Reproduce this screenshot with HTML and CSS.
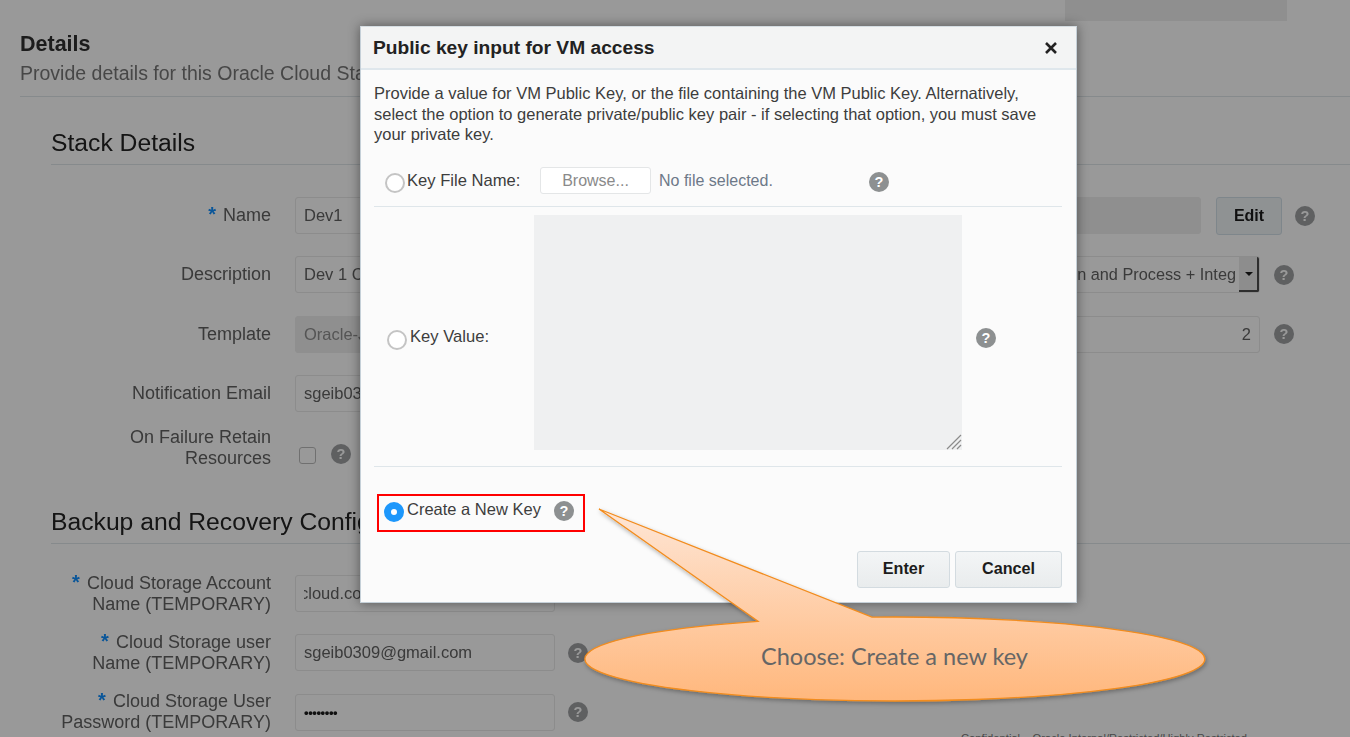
FILE: index.html
```html
<!DOCTYPE html>
<html lang="en">
<head>
  <meta charset="UTF-8">
  <meta name="viewport" content="width=device-width, initial-scale=1.0">
  <title>Public key input for VM access</title>
  <link rel="stylesheet" href="styles.css">
</head>
<body>
  <div class="page">
    <div class="top-block"></div>
    <div class="details-head">
      <h2>Details</h2>
      <p>Provide details for this Oracle Cloud Stack</p>
    </div>

    <section class="group">
      <h3>Stack Details</h3>
      <div class="rows">
        <div class="row">
          <label class="lbl"><span class="req">*</span> Name</label>
          <div class="field">Dev1</div>
          <div class="side">
            <div class="field field-off grow"></div>
            <button class="edit-btn">Edit</button>
            <span class="help help-dark"></span>
          </div>
        </div>
        <div class="row">
          <label class="lbl">Description</label>
          <div class="field">Dev 1 Cloud Stack</div>
          <div class="side side-short">
            <div class="field field-select grow">
              <span class="select-text">n and Process + Integ</span>
              <span class="select-arrow"></span>
            </div>
            <span class="help help-dark"></span>
          </div>
        </div>
        <div class="row">
          <label class="lbl">Template</label>
          <div class="field field-off field-muted">Oracle-JCS</div>
          <div class="side side-short">
            <div class="field grow field-num">2</div>
            <span class="help help-dark"></span>
          </div>
        </div>
        <div class="row">
          <label class="lbl">Notification Email</label>
          <div class="field">sgeib0309@gmail.com</div>
        </div>
        <div class="row row-check">
          <label class="lbl">On Failure Retain<br>Resources</label>
          <div class="check-wrap">
            <span class="check"></span>
            <span class="help help-dark"></span>
          </div>
        </div>
      </div>
    </section>

    <section class="group group-backup">
      <h3>Backup and Recovery Configuration</h3>
      <div class="rows">
        <div class="row">
          <label class="lbl"><span class="req">*</span> Cloud Storage Account<br>Name (TEMPORARY)</label>
          <div class="field"><span class="clip-left">cloud.com</span></div>
        </div>
        <div class="row">
          <label class="lbl"><span class="req">*</span> Cloud Storage user<br>Name (TEMPORARY)</label>
          <div class="field">sgeib0309@gmail.com</div>
          <span class="help help-dark help-after"></span>
        </div>
        <div class="row">
          <label class="lbl"><span class="req">*</span> Cloud Storage User<br>Password (TEMPORARY)</label>
          <div class="field field-dots">&#8226;&#8226;&#8226;&#8226;&#8226;&#8226;&#8226;&#8226;</div>
          <span class="help help-dark help-after"></span>
        </div>
      </div>
    </section>
  </div>

  <div class="slide-footer">Confidential &ndash; Oracle Internal/Restricted/Highly Restricted</div>

  <div class="backdrop"></div>

  <div class="dialog">
    <div class="dialog-head">
      <h4>Public key input for VM access</h4>
      <svg class="close" width="14" height="14" viewBox="0 0 14 14"><path d="M2 2 L12 12 M12 2 L2 12" stroke="#222" stroke-width="2.6"/></svg>
    </div>
    <div class="dialog-body">
      <p class="intro">Provide a value for VM Public Key, or the file containing the VM Public Key. Alternatively, select the option to generate private/public key pair - if selecting that option, you must save your private key.</p>

      <div class="key-row key-file">
        <span class="radio"></span>
        <span class="opt-label">Key File Name:</span>
        <button class="browse">Browse...</button>
        <span class="no-file">No file selected.</span>
        <span class="help help-light"></span>
      </div>

      <div class="key-row key-value">
        <span class="radio"></span>
        <span class="opt-label">Key Value:</span>
        <div class="textarea">
          <svg class="grip" width="16" height="16" viewBox="0 0 16 16"><path d="M1 15 L15 1 M6 15 L15 6 M11 15 L15 11" stroke="#8b8b8b" stroke-width="1.2"/></svg>
        </div>
        <span class="help help-light"></span>
      </div>

      <div class="new-key">
        <span class="radio radio-on"></span>
        <span class="opt-label">Create a New Key</span>
        <span class="help help-light"></span>
      </div>

      <div class="dialog-btns">
        <button class="btn btn-enter">Enter</button>
        <button class="btn btn-cancel">Cancel</button>
      </div>
    </div>
  </div>

  <svg class="callout" width="1350" height="737" viewBox="0 0 1350 737">
    <defs>
      <linearGradient id="calloutFill" gradientUnits="userSpaceOnUse" x1="0" y1="509" x2="0" y2="701">
        <stop offset="0" stop-color="#fee6d6"/>
        <stop offset="1" stop-color="#ffb77c"/>
      </linearGradient>
      <filter id="calloutShadow" x="-5%" y="-5%" width="110%" height="115%">
        <feDropShadow dx="1" dy="2" stdDeviation="2" flood-color="#000" flood-opacity="0.3"/>
      </filter>
    </defs>
    <path d="M599 509 L872 617.1 A310 42 0 1 1 758 621.3 Z" fill="url(#calloutFill)" stroke="#f28c1e" stroke-width="1.3" filter="url(#calloutShadow)"/>
    <text class="callout-text" x="761" y="665">Choose: Create a new key</text>
  </svg>
</body>
</html>
```

FILE: styles.css
```css
html, body {
  margin: 0;
  padding: 0;
  height: 100%;
  overflow: hidden;
}
body {
  position: relative;
  background-color: #fff;
  font-family: "Liberation Sans", Arial, sans-serif;
  color: #626262;
}
.page {
  height: 737px;
  overflow: hidden;
  background: #fff;
  filter: blur(0.5px);
}
.backdrop {
  position: absolute;
  left: 0;
  top: 0;
  width: 100%;
  height: 100%;
  background: rgba(0, 0, 0, 0.4);
}
.top-block {
  margin-left: 1065px;
  width: 222px;
  height: 21px;
  background: #eee;
}
.details-head {
  margin-left: 20px;
  height: 76px;
  padding-top: 9px;
  border-bottom: 1px solid #dfe6ea;
  box-sizing: border-box;
}
.details-head h2 {
  margin: 0;
  font-size: 21.5px;
  line-height: 28px;
  color: #2f2f2f;
}
.details-head p {
  margin: 3px 0 0;
  font-size: 19.5px;
  line-height: 24px;
  color: #777;
}
.group {
  margin-left: 51px;
}
.group h3 {
  margin: 0;
  font-size: 24.7px;
  font-weight: normal;
  line-height: 30px;
  color: #232323;
  padding: 31px 0 6px;
  border-bottom: 1px solid #dfe6ea;
}
.rows {
  display: flex;
  flex-direction: column;
  gap: 22.3px;
  padding-top: 32px;
}
.row {
  display: flex;
  align-items: center;
  height: 37px;
}
.lbl {
  width: 220px;
  text-align: right;
  font-size: 18px;
  line-height: 21px;
  color: #626262;
  flex-shrink: 0;
}
.req {
  margin-right: 2px;
  color: #1290ff;
  font-weight: bold;
  font-size: 20px;
  line-height: 10px;
}
.field {
  box-sizing: border-box;
  width: 260px;
  height: 37px;
  margin-left: 24px;
  padding: 0 8px;
  border: 1px solid #e9e9e9;
  border-radius: 3px;
  background: #fff;
  font-size: 16.5px;
  line-height: 35px;
  white-space: nowrap;
  overflow: hidden;
  flex-shrink: 0;
}
.field-off {
  background: #eee;
  border-color: #eee;
}
.field-muted {
  color: #8e8e8e;
}
.side {
  display: flex;
  align-items: center;
  margin-left: 40px;
  width: 720px;
  gap: 15px;
}
.side .edit-btn {
  margin-right: -2px;
}
.side-short {
  gap: 14px;
  width: 699px;
}
.side .grow {
  flex: 1;
  width: auto;
  margin-left: 0;
}
.field-select {
  display: flex;
  padding: 0;
  justify-content: flex-end;
}
.select-text {
  font-size: 16.3px;
  margin-right: 3px;
}
.select-arrow {
  position: relative;
  width: 20px;
  height: 35px;
  background: #ebebeb;
  border-right: 2px solid #4d4d4d;
  border-bottom: 2px solid #4d4d4d;
  box-sizing: border-box;
  flex-shrink: 0;
}
.select-arrow::after {
  content: "";
  position: absolute;
  left: 6px;
  top: 15px;
  border-left: 4px solid transparent;
  border-right: 4px solid transparent;
  border-top: 4px solid #1c1c1c;
}
.field-num {
  text-align: right;
}
.edit-btn {
  width: 66px;
  height: 38px;
  padding: 0;
  border: 1px solid #d3e0e8;
  border-radius: 3px;
  background: #eef3f6;
  color: #1c1c1c;
  font-family: inherit;
  font-size: 16px;
  font-weight: bold;
}
.help {
  display: inline-flex;
  justify-content: center;
  align-items: center;
  width: 20px;
  height: 20px;
  border-radius: 50%;
  flex-shrink: 0;
  color: #fff;
  font-size: 14.5px;
  font-weight: bold;
}
.help::before {
  content: "?";
}
.help-dark {
  background: #9ea0a2;
}
.help-light {
  background: #8d9091;
}
.help-after {
  margin-left: 13px;
}
.row-check {
  margin-top: -7px;
  height: 42px;
}
.check-wrap {
  display: flex;
  align-items: center;
  margin-top: 15px;
  margin-left: 28px;
  gap: 15px;
}
.check-wrap .help {
  margin-top: -4px;
}
.check {
  width: 15px;
  height: 15px;
  border: 1px solid #bbb;
  border-radius: 3px;
  background: #fff;
}
.group-backup h3 {
  margin-top: 7px;
}
.group-backup .rows {
  padding-top: 31px;
}
.clip-left {
  display: block;
  text-indent: -4px;
  overflow: hidden;
}
.field-dots {
  font-size: 13px;
  font-weight: bold;
  color: #1c1c1c;
  letter-spacing: -0.4px;
}
.slide-footer {
  position: absolute;
  left: 961px;
  top: 732px;
  font-size: 11.2px;
  line-height: 12px;
  color: #777;
  white-space: nowrap;
}
.dialog {
  position: absolute;
  left: 360px;
  top: 26px;
  width: 717px;
  height: 577px;
  box-sizing: border-box;
  background: #fbfbfb;
  border: 1px solid #c5d0d8;
  border-top: 1px solid #d5dde2;
  box-shadow: 0 0 11px rgba(0, 0, 0, 0.45);
}
.dialog-head {
  display: flex;
  justify-content: space-between;
  align-items: center;
  height: 41px;
  padding: 0 18px 0 12px;
  background: #f3f4f4;
  border-bottom: 2px solid #dfe7ec;
}
.dialog-head h4 {
  margin: 0;
  font-size: 19.2px;
  color: #222;
}
.dialog-body {
  padding: 13px 14px 0 13px;
}
.intro {
  margin: 0;
  font-size: 16.5px;
  line-height: 20.5px;
  color: #3d3d3d;
}
.key-row {
  display: flex;
  align-items: center;
  border-bottom: 1px solid #dfe6ea;
}
.radio {
  box-sizing: border-box;
  width: 20px;
  height: 20px;
  border: 2px solid #c4c4c4;
  border-radius: 50%;
  background: #fff;
  flex-shrink: 0;
}
.radio-on {
  border: 7px solid #1d97fb;
  background: #fff;
}
.opt-label {
  font-size: 16.6px;
  color: #3d3d3d;
}
.key-file {
  height: 41px;
  margin-top: 20px;
  padding-left: 11px;
}
.key-file .radio {
  margin-top: -4px;
}
.key-file .opt-label {
  margin: 0 0 8px 2px;
  width: 133px;
}
.key-file .help {
  margin-bottom: 6px;
}
.browse {
  box-sizing: border-box;
  width: 111px;
  height: 27px;
  margin-bottom: 9px;
  padding: 0;
  border: 1px solid #e4e6e7;
  border-radius: 3px;
  background: #fff;
  color: #8a8a8a;
  font-family: inherit;
  font-size: 16px;
}
.no-file {
  margin: 0 0 8px 8px;
  width: 210px;
  font-size: 16px;
  color: #6d7888;
}
.key-value {
  height: 259px;
  padding-left: 13px;
}
.key-value .radio {
  margin-top: 8px;
}
.key-value .opt-label {
  margin: 2px 0 0 3px;
  width: 124px;
}
.textarea {
  position: relative;
  width: 428px;
  height: 235px;
  margin-bottom: 8px;
  background: #eff0f1;
}
.grip {
  position: absolute;
  right: 0;
  bottom: 0;
}
.key-value .help {
  margin: 4px 0 0 14px;
}
.new-key {
  display: flex;
  align-items: center;
  box-sizing: border-box;
  width: 208px;
  height: 38px;
  margin: 27px 0 0 3px;
  padding-left: 5px;
  border: 2px solid #ff0000;
}
.new-key .radio {
  margin-top: -1px;
}
.new-key .opt-label {
  margin: -7px 0 0 3px;
  font-size: 16.5px;
  width: 147px;
}
.new-key .help {
  margin-top: -4px;
}
.dialog-btns {
  display: flex;
  justify-content: flex-end;
  gap: 5px;
  margin-top: 19px;
}
.btn {
  height: 37px;
  padding: 0 0 2px;
  border: 1px solid #d3dbe0;
  border-radius: 3px;
  background: linear-gradient(#f3f5f6, #e9eced);
  color: #1c1c1c;
  font-family: inherit;
  font-size: 16.2px;
  font-weight: bold;
}
.btn-enter {
  width: 93px;
}
.btn-cancel {
  width: 107px;
}
.callout {
  position: absolute;
  left: 0;
  top: 0;
}
.callout-text {
  font-family: Lato, "Open Sans", sans-serif;
  font-size: 23.5px;
  fill: #666;
}
```
